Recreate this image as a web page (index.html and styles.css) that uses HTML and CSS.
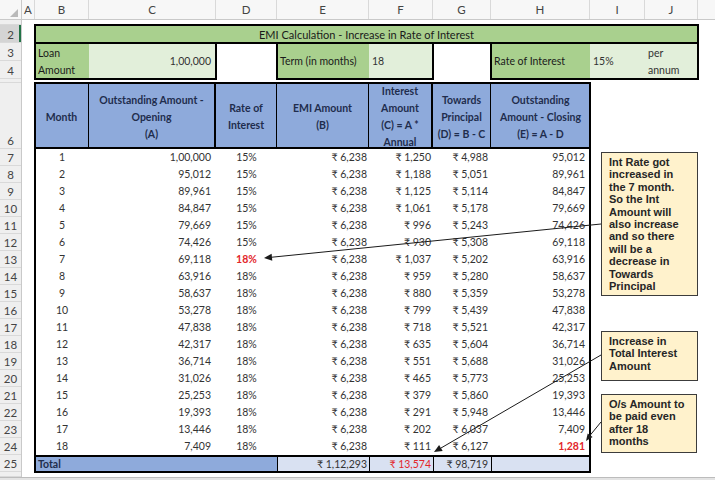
FILE: index.html
```html
<!DOCTYPE html>
<html>
<head>
<meta charset="utf-8">
<title>EMI Calculation - Increase in Rate of Interest</title>
<link rel="stylesheet" href="styles.css">
</head>
<body>
<div class="app">
  <div class="sheet">
    <div class="corner"><svg width="22" height="20" viewBox="0 0 22 20"><polygon points="10,17 18,17 18,9" fill="#b9b9b9"/></svg></div>
    <div class="colheads">
      <div class="ch wA">A</div>
      <div class="ch wB">B</div>
      <div class="ch wC">C</div>
      <div class="ch wD">D</div>
      <div class="ch wE">E</div>
      <div class="ch wF">F</div>
      <div class="ch wG">G</div>
      <div class="ch wH">H</div>
      <div class="ch wI">I</div>
      <div class="ch wJ">J</div>
      <div class="ch wK"></div>
    </div>
    <div class="rowheads">
      <div class="rh h5"></div>
      <div class="rh h18 sel">2</div>
      <div class="rh h18">3</div>
      <div class="rh h18">4</div>
      <div class="rh h4"></div>
      <div class="rh h66">6</div>
      <div class="rh h17">7</div>
      <div class="rh h17">8</div>
      <div class="rh h17">9</div>
      <div class="rh h17">10</div>
      <div class="rh h17">11</div>
      <div class="rh h17">12</div>
      <div class="rh h17">13</div>
      <div class="rh h17">14</div>
      <div class="rh h17">15</div>
      <div class="rh h17">16</div>
      <div class="rh h17">17</div>
      <div class="rh h17">18</div>
      <div class="rh h17">19</div>
      <div class="rh h17">20</div>
      <div class="rh h17">21</div>
      <div class="rh h17">22</div>
      <div class="rh h17">23</div>
      <div class="rh h17">24</div>
      <div class="rh h17">25</div>
      <div class="rh h5"></div>
    </div>
    <div class="canvas">
      <div class="title">EMI Calculation - Increase in Rate of Interest</div>

      <div class="inbox loan">
        <div class="lbl two">Loan<br>Amount</div>
        <div class="val right">1,00,000</div>
      </div>
      <div class="inbox term">
        <div class="lbl">Term (in months)</div>
        <div class="val">18</div>
      </div>
      <div class="inbox rate">
        <div class="lbl">Rate of Interest</div>
        <div class="val">15%</div>
        <div class="val two">per<br>annum</div>
      </div>

      <div class="table">
        <div class="th">Month</div>
        <div class="th thick">Outstanding Amount -<br>Opening<br>(A)</div>
        <div class="th">Rate of<br>Interest</div>
        <div class="th">EMI Amount<br>(B)</div>
        <div class="th thick">Interest<br>Amount<br>(C) = A *<br>Annual</div>
        <div class="th">Towards<br>Principal<br>(D) = B - C</div>
        <div class="th last">Outstanding<br>Amount - Closing<br>(E) = A - D</div>

        <div class="td ctr">1</div><div class="td rt p5">1,00,000</div><div class="td ctr">15%</div><div class="td rt p2">₹ 6,238</div><div class="td rt p2">₹ 1,250</div><div class="td rt p3">₹ 4,988</div><div class="td rt p5">95,012</div>
        <div class="td ctr">2</div><div class="td rt p5">95,012</div><div class="td ctr">15%</div><div class="td rt p2">₹ 6,238</div><div class="td rt p2">₹ 1,188</div><div class="td rt p3">₹ 5,051</div><div class="td rt p5">89,961</div>
        <div class="td ctr">3</div><div class="td rt p5">89,961</div><div class="td ctr">15%</div><div class="td rt p2">₹ 6,238</div><div class="td rt p2">₹ 1,125</div><div class="td rt p3">₹ 5,114</div><div class="td rt p5">84,847</div>
        <div class="td ctr">4</div><div class="td rt p5">84,847</div><div class="td ctr">15%</div><div class="td rt p2">₹ 6,238</div><div class="td rt p2">₹ 1,061</div><div class="td rt p3">₹ 5,178</div><div class="td rt p5">79,669</div>
        <div class="td ctr">5</div><div class="td rt p5">79,669</div><div class="td ctr">15%</div><div class="td rt p2">₹ 6,238</div><div class="td rt p2">₹ 996</div><div class="td rt p3">₹ 5,243</div><div class="td rt p5">74,426</div>
        <div class="td ctr">6</div><div class="td rt p5">74,426</div><div class="td ctr">15%</div><div class="td rt p2">₹ 6,238</div><div class="td rt p2">₹ 930</div><div class="td rt p3">₹ 5,308</div><div class="td rt p5">69,118</div>
        <div class="td ctr">7</div><div class="td rt p5">69,118</div><div class="td ctr red bold">18%</div><div class="td rt p2">₹ 6,238</div><div class="td rt p2">₹ 1,037</div><div class="td rt p3">₹ 5,202</div><div class="td rt p5">63,916</div>
        <div class="td ctr">8</div><div class="td rt p5">63,916</div><div class="td ctr">18%</div><div class="td rt p2">₹ 6,238</div><div class="td rt p2">₹ 959</div><div class="td rt p3">₹ 5,280</div><div class="td rt p5">58,637</div>
        <div class="td ctr">9</div><div class="td rt p5">58,637</div><div class="td ctr">18%</div><div class="td rt p2">₹ 6,238</div><div class="td rt p2">₹ 880</div><div class="td rt p3">₹ 5,359</div><div class="td rt p5">53,278</div>
        <div class="td ctr">10</div><div class="td rt p5">53,278</div><div class="td ctr">18%</div><div class="td rt p2">₹ 6,238</div><div class="td rt p2">₹ 799</div><div class="td rt p3">₹ 5,439</div><div class="td rt p5">47,838</div>
        <div class="td ctr">11</div><div class="td rt p5">47,838</div><div class="td ctr">18%</div><div class="td rt p2">₹ 6,238</div><div class="td rt p2">₹ 718</div><div class="td rt p3">₹ 5,521</div><div class="td rt p5">42,317</div>
        <div class="td ctr">12</div><div class="td rt p5">42,317</div><div class="td ctr">18%</div><div class="td rt p2">₹ 6,238</div><div class="td rt p2">₹ 635</div><div class="td rt p3">₹ 5,604</div><div class="td rt p5">36,714</div>
        <div class="td ctr">13</div><div class="td rt p5">36,714</div><div class="td ctr">18%</div><div class="td rt p2">₹ 6,238</div><div class="td rt p2">₹ 551</div><div class="td rt p3">₹ 5,688</div><div class="td rt p5">31,026</div>
        <div class="td ctr">14</div><div class="td rt p5">31,026</div><div class="td ctr">18%</div><div class="td rt p2">₹ 6,238</div><div class="td rt p2">₹ 465</div><div class="td rt p3">₹ 5,773</div><div class="td rt p5">25,253</div>
        <div class="td ctr">15</div><div class="td rt p5">25,253</div><div class="td ctr">18%</div><div class="td rt p2">₹ 6,238</div><div class="td rt p2">₹ 379</div><div class="td rt p3">₹ 5,860</div><div class="td rt p5">19,393</div>
        <div class="td ctr">16</div><div class="td rt p5">19,393</div><div class="td ctr">18%</div><div class="td rt p2">₹ 6,238</div><div class="td rt p2">₹ 291</div><div class="td rt p3">₹ 5,948</div><div class="td rt p5">13,446</div>
        <div class="td ctr">17</div><div class="td rt p5">13,446</div><div class="td ctr">18%</div><div class="td rt p2">₹ 6,238</div><div class="td rt p2">₹ 202</div><div class="td rt p3">₹ 6,037</div><div class="td rt p5">7,409</div>
        <div class="td ctr">18</div><div class="td rt p5">7,409</div><div class="td ctr">18%</div><div class="td rt p2">₹ 6,238</div><div class="td rt p2">₹ 111</div><div class="td rt p3">₹ 6,127</div><div class="td rt p5 red bold">1,281</div>

        <div class="td tot totl">Total</div>
        <div class="td tot totv p2">₹ 1,12,293</div>
        <div class="td tot totv p2 red">₹ 13,574</div>
        <div class="td tot totv p3">₹ 98,719</div>
        <div class="td tot totv"></div>
      </div>
    </div>
  </div>
  <div class="tabs"></div>

  <div class="note n1">Int Rate got<br>increased in<br>the 7 month.<br>So the Int<br>Amount will<br>also increase<br>and so there<br>will be a<br>decrease in<br>Towards<br>Principal</div>
  <div class="note n2">Increase in<br>Total Interest<br>Amount</div>
  <div class="note n3">O/s Amount to<br>be paid even<br>after 18<br>months</div>

  <svg class="arrows" width="715" height="480" viewBox="0 0 715 480">
    <line x1="601" y1="224" x2="272" y2="257.2" stroke="#1a1a1a" stroke-width="1"/>
    <polygon points="264,258 271.6,253.7 272.3,260.7" fill="#1a1a1a"/>
    <line x1="601" y1="355" x2="441" y2="448" stroke="#1a1a1a" stroke-width="1"/>
    <polygon points="434,452 439.1,444.9 442.7,451" fill="#1a1a1a"/>
    <line x1="601" y1="422" x2="590" y2="435.4" stroke="#1a1a1a" stroke-width="1"/>
    <polygon points="586,441 587.7,433.6 592.6,437.1" fill="#1a1a1a"/>
  </svg>
</div>
</body>
</html>
```

FILE: styles.css
```css
* { box-sizing: border-box; }

body {
  margin: 0;
  font-family: "Lato", "Noto Sans", "DejaVu Sans", sans-serif;
  background: #fff;
}

.app {
  position: relative;
  width: 715px;
  height: 480px;
  overflow: hidden;
  display: flex;
  flex-direction: column;
  background: #fff;
}

.sheet {
  flex: 1;
  min-height: 0;
  display: grid;
  grid-template-columns: 22px 1fr;
  grid-template-rows: 20px 1fr;
}

.corner {
  background: #f7f7f7;
  border-right: 1px solid #c9c9c9;
  border-bottom: 1px solid #c9c9c9;
}
.corner svg { display: block; }

.colheads {
  display: flex;
  background: #f7f7f7;
  border-bottom: 1px solid #c9c9c9;
  overflow: hidden;
}
.ch {
  flex: none;
  border-right: 1px solid #d9d9d9;
  text-align: center;
  font-size: 11.5px;
  line-height: 19px;
  color: #444;
}
.wA { width: 13px; }
.wB { width: 54px; }
.wC { width: 127px; }
.wD { width: 61px; }
.wE { width: 92px; }
.wF { width: 64px; }
.wG { width: 58px; }
.wH { width: 99px; }
.wI { width: 55px; }
.wJ { width: 53px; }
.wK { flex: 1; border-right: none; }

.rowheads {
  display: flex;
  flex-direction: column;
  background: #efefef;
  border-right: 1px solid #c9c9c9;
  overflow: hidden;
}
.rh {
  flex: none;
  border-bottom: 1px solid #d9d9d9;
  display: flex;
  align-items: flex-end;
  justify-content: center;
  font-size: 11.5px;
  line-height: 15px;
  color: #444;
  overflow: hidden;
}
.h4 { height: 4px; }
.h5 { height: 5px; }
.h17 { height: 17px; }
.h18 { height: 18px; }
.h66 { height: 66px; }
.rh.sel {
  background: #d4d4d4;
  box-shadow: inset -2px 0 #217346;
}

.canvas {
  display: grid;
  grid-template-columns: 13px 54px 127px 61px 92px 64px 58px 99px 55px 53px 1fr;
  grid-template-rows: 5px 18px 18px 18px 4px 66px repeat(19, 17px) 1fr;
  font-size: 10.5px;
  color: #333;
}

.title {
  grid-column: 2 / 11;
  grid-row: 2;
  background: #a9d08e;
  outline: 2px solid #000;
  outline-offset: -1px;
  display: flex;
  align-items: flex-end;
  justify-content: center;
  line-height: 15px;
  padding-bottom: 1px;
  color: #1a1a1a;
  font-size: 11px;
}

.inbox {
  grid-row: 3 / 5;
  display: grid;
  outline: 2px solid #000;
  outline-offset: -1px;
  position: relative;
}
.loan { grid-column: 2 / 4; grid-template-columns: 54px 127px; }
.term { grid-column: 5 / 7; grid-template-columns: 92px 64px; }
.rate { grid-column: 8 / 11; grid-template-columns: 99px 55px 53px; }

.lbl {
  background: #a9d08e;
  display: flex;
  align-items: center;
  padding-left: 3px;
  line-height: 17px;
  color: #1a1a1a;
  white-space: nowrap;
}
.val {
  background: #e2efda;
  display: flex;
  align-items: center;
  padding: 0 3px;
  line-height: 17px;
  color: #333;
  white-space: nowrap;
}
.val.right { justify-content: flex-end; padding-right: 5px; }
.two { padding-top: 2px; }

.table {
  grid-column: 2 / 9;
  grid-row: 6 / 26;
  display: grid;
  grid-template-columns: 54px 127px 61px 92px 64px 58px 99px;
  grid-template-rows: 66px repeat(19, 17px);
  outline: 2px solid #000;
  outline-offset: -1px;
  background: #fff;
  position: relative;
}

.th {
  background: #8eaadb;
  border-bottom: 2px solid #000;
  border-right: 1px solid #000;
  display: flex;
  flex-direction: column;
  justify-content: center;
  align-items: center;
  text-align: center;
  font-weight: 700;
  line-height: 17px;
  padding-top: 4px;
  overflow: hidden;
  color: #1f2d4d;
  white-space: nowrap;
}
.th.thick { border-right-width: 2px; }
.th.last { border-right: none; }

.td {
  padding: 0 3px;
  line-height: 17px;
  white-space: nowrap;
  overflow: hidden;
}
.ctr { text-align: center; }
.rt { text-align: right; }
.p2 { padding-right: 2px; }
.p3 { padding-right: 3px; }
.p5 { padding-right: 5px; }
.red { color: #e3262b; }
.bold { font-weight: 700; }

.tot {
  border-top: 2px solid #000;
  line-height: 15px;
}
.totl {
  grid-column: span 3;
  background: #8eaadb;
  font-weight: 700;
  color: #1f2d4d;
}
.totv {
  background: #d9e1f2;
  border-left: 1px solid #000;
  text-align: right;
}

.tabs {
  flex: none;
  height: 3px;
  background: #e3e3e3;
  border-top: 1px solid #bcbcbc;
}

.note {
  position: absolute;
  background: #fff2cc;
  border: 1px solid #3c3c3c;
  font-family: "Liberation Sans", Arial, sans-serif;
  font-weight: 700;
  font-size: 11px;
  line-height: 12.4px;
  color: #262626;
  padding: 3px 0 0 7px;
  white-space: nowrap;
}
.n1 { left: 601px; top: 152px; width: 97px; height: 144px; }
.n2 { left: 601px; top: 331px; width: 97px; height: 50px; }
.n3 { left: 601px; top: 394px; width: 96px; height: 59px; }

.arrows {
  position: absolute;
  left: 0;
  top: 0;
  pointer-events: none;
}
```
